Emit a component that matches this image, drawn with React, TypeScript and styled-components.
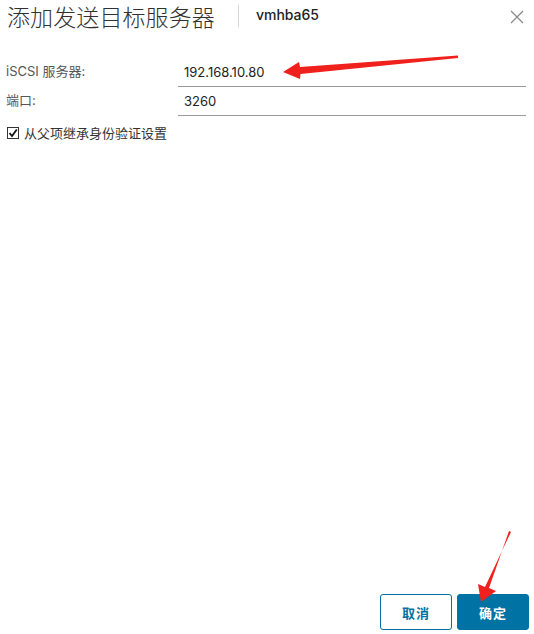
import styled, { createGlobalStyle } from "styled-components";

const GlobalStyle = createGlobalStyle`
	html, body {
		margin: 0;
		padding: 0;
		background: #ffffff;
	}
	body {
		font-family: "Inter", "Noto Sans CJK SC", sans-serif;
		color: #333333;
	}
`;

const Modal = styled.div`
	position: relative;
	width: 534px;
	height: 634px;
	display: flex;
	flex-direction: column;
	box-sizing: border-box;
	background: #ffffff;
	overflow: hidden;
`;

const Header = styled.div`
	display: flex;
	align-items: center;
	min-height: 32px;
	padding: 0 7px 0 7px;
`;

const Title = styled.h3`
	margin: 0;
	font-family: "Noto Sans CJK SC", sans-serif;
	font-size: 23px;
	font-weight: 300;
	letter-spacing: 0.1px;
	color: #313131;
	line-height: 32px;
	white-space: nowrap;
`;

const Divider = styled.span`
	width: 1px;
	height: 22px;
	background: #d6d6d6;
	margin: 0 17px 0 23px;
`;

const SubTitle = styled.span`
	font-family: "Inter", sans-serif;
	font-size: 14px;
	font-weight: 500;
	color: #222222;
	padding-bottom: 3px;
`;

const CloseButton = styled.button`
	margin-left: auto;
	width: 20px;
	height: 20px;
	padding: 0;
	border: none;
	background: transparent;
	display: flex;
	align-items: center;
	justify-content: center;
	margin-top: 1px;
	cursor: pointer;
`;

const Body = styled.div`
	flex: 1;
	padding: 26px 8px 0 6px;
	display: flex;
	flex-direction: column;
`;

const FormRow = styled.div`
	display: grid;
	grid-template-columns: 172px 348px;
	align-items: end;
	height: 29px;
`;

const Label = styled.label`
	font-family: "Inter", "Noto Sans CJK SC", sans-serif;
	font-size: 13px;
	color: #565656;
	padding-bottom: 7px;
`;

const Input = styled.input`
	font-family: "Inter", sans-serif;
	font-size: 13px;
	color: #222222;
	border: none;
	border-bottom: 1px solid #9a9a9a;
	padding: 0 0 5px 6px;
	height: 24px;
	box-sizing: border-box;
	outline: none;
	background: transparent;
	width: 100%;
`;

const CheckRow = styled.label`
	display: flex;
	align-items: center;
	gap: 5px;
	margin-top: 7px;
	margin-left: 1px;
	font-family: "Noto Sans CJK SC", sans-serif;
	font-size: 13px;
	color: #333333;
`;

const CheckBox = styled.span`
	width: 12px;
	height: 12px;
	box-sizing: border-box;
	border: 1px solid #333333;
	display: flex;
	align-items: center;
	justify-content: center;
	background: #ffffff;
`;

const Footer = styled.div`
	display: flex;
	justify-content: flex-end;
	gap: 5px;
	padding: 0 5px 4px 0;
`;

const Button = styled.button<{ $primary?: boolean }>`
	width: 72px;
	height: 36px;
	border-radius: 3px;
	font-family: "Noto Sans CJK SC", sans-serif;
	font-size: 13px;
	font-weight: 600;
	letter-spacing: 1px;
	cursor: pointer;
	border: 1px solid #0072a3;
	background: ${(p) => (p.$primary ? "#0072a3" : "#ffffff")};
	color: ${(p) => (p.$primary ? "#ffffff" : "#0072a3")};
`;

const Overlay = styled.svg`
	position: absolute;
	left: 0;
	top: 0;
	pointer-events: none;
`;

export default function App() {
	return (
		<>
			<GlobalStyle />
			<Modal>
				<Header>
					<Title>添加发送目标服务器</Title>
					<Divider />
					<SubTitle>vmhba65</SubTitle>
					<CloseButton aria-label="close">
						<svg width="14" height="14" viewBox="0 0 14 14">
							<path d="M1 1 L13 13 M13 1 L1 13" stroke="#8a8a8a" strokeWidth="1.3" />
						</svg>
					</CloseButton>
				</Header>
				<Body>
					<FormRow>
						<Label>iSCSI 服务器:</Label>
						<Input defaultValue="192.168.10.80" />
					</FormRow>
					<FormRow>
						<Label>端口:</Label>
						<Input defaultValue="3260" />
					</FormRow>
					<CheckRow>
						<CheckBox>
							<svg width="10" height="10" viewBox="0 0 10 10">
								<path d="M1.5 5 L4 8 L8.8 1.5" stroke="#111" strokeWidth="1.8" fill="none" />
							</svg>
						</CheckBox>
						从父项继承身份验证设置
					</CheckRow>
				</Body>
				<Footer>
					<Button>取消</Button>
					<Button $primary>确定</Button>
				</Footer>
				<Overlay width="534" height="634" viewBox="0 0 534 634">
					{/* annotation arrow to the server field */}
					<path
						d="M458 55.5 L300 67 L299 62 L283 72 L300 79 L300.5 74 L458 58 Z"
						fill="#f0201c"
					/>
					{/* annotation arrow to the OK button */}
					<path
						d="M509 531 L489 588 L496 591 L481 602 L478 584 L485 587 L511 532 Z"
						fill="#f0201c"
					/>
				</Overlay>
			</Modal>
		</>
	);
}
